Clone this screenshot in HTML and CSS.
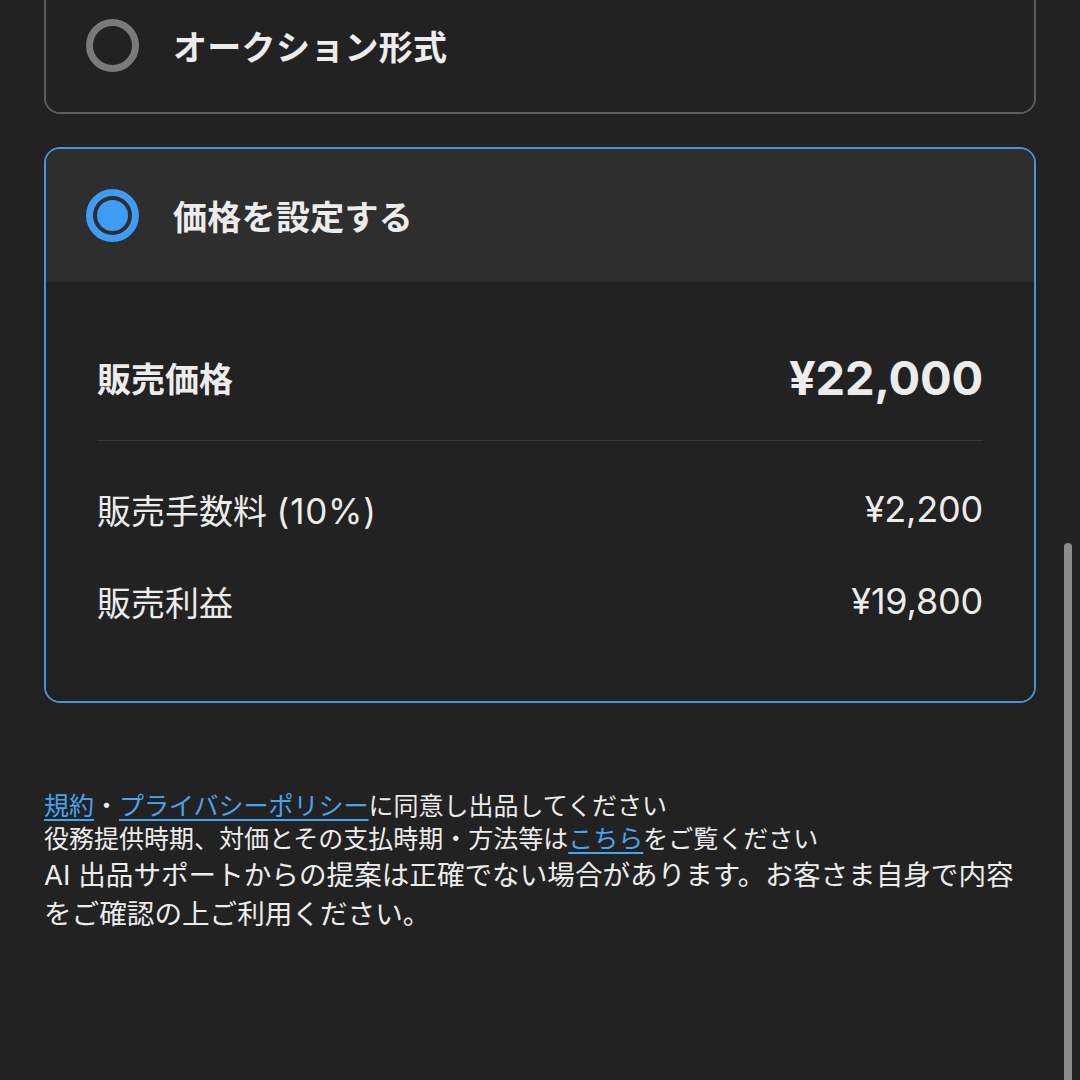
FILE: index.html
```html
<!DOCTYPE html>
<html lang="ja">
<head>
  <meta charset="utf-8">
  <title>出品設定</title>
  <link rel="stylesheet" href="styles.css">
</head>
<body>
  <div class="page">
    <div class="option">
      <div class="option-head">
        <span class="radio"></span>
        <span class="option-title">オークション形式</span>
      </div>
    </div>

    <div class="option selected">
      <div class="option-head">
        <span class="radio checked"></span>
        <span class="option-title">価格を設定する</span>
      </div>
      <div class="option-body">
        <div class="price-row main">
          <span class="label">販売価格</span>
          <span class="amount">¥22,000</span>
        </div>
        <hr class="divider">
        <div class="price-row">
          <span class="label">販売手数料 <span class="rate">(10%)</span></span>
          <span class="amount">¥2,200</span>
        </div>
        <div class="price-row">
          <span class="label">販売利益</span>
          <span class="amount">¥19,800</span>
        </div>
      </div>
    </div>

    <div class="notes">
      <p class="terms"><a href="#">規約</a>・<a href="#">プライバシーポリシー</a>に同意し出品してください<br>役務提供時期、対価とその支払時期・方法等は<a href="#">こちら</a>をご覧ください</p>
      <p class="ai-note">AI 出品サポートからの提案は正確でない場合があります。お客さま自身で内容をご確認の上ご利用ください。</p>
    </div>
  </div>

  <div class="scrollbar"></div>
</body>
</html>
```

FILE: styles.css
```css
/* dark listing form */

html,
body {
  margin: 0;
  background: #222222;
  height: 100%;
  overflow: hidden;
}

body {
  font-family: Inter, "Noto Sans CJK JP", sans-serif;
  color: #ececec;
}

.page {
  padding: 0 44px;
  margin-top: -23px;
}

.option {
  border: 2px solid #5c5c5c;
  border-radius: 16px;
  overflow: hidden;
  margin-bottom: 33px;
}

.option.selected {
  border-color: #4a92e0;
}

.option-head {
  display: flex;
  align-items: center;
  height: 133px;
  padding-left: 40px;
  background: #222222;
}

.option.selected .option-head {
  background: #2e2e2e;
}

.radio {
  box-sizing: border-box;
  width: 53px;
  height: 53px;
  border: 7px solid #7a7a7a;
  border-radius: 50%;
  flex-shrink: 0;
}

.radio.checked {
  border-color: #3f9cf4;
  padding: 4px;
}

.radio.checked::after {
  content: "";
  display: block;
  width: 100%;
  height: 100%;
  border-radius: 50%;
  background: #3f9cf4;
}

.option-title {
  margin-left: 34px;
  font-size: 34px;
  font-weight: 700;
  letter-spacing: 0.3px;
}

.option-body {
  padding: 67px 51px 76px;
  background: #222222;
}

.price-row {
  display: flex;
  justify-content: space-between;
  align-items: center;
  height: 48px;
  font-size: 34px;
  margin-top: 44px;
}

.price-row.main {
  height: 56px;
  margin-top: 0;
}

.price-row.main .label {
  font-weight: 700;
}

.price-row.main .amount {
  font-size: 47px;
  font-weight: 700;
}

.rate {
  font-size: 35px;
  letter-spacing: 0.8px;
}

.amount {
  font-size: 36px;
  letter-spacing: -0.2px;
}

.divider {
  border: 0;
  border-top: 1px solid #3a3a3a;
  margin: 35px 0 0;
}

.notes {
  margin-top: 87px;
  padding-right: 16px;
}

.notes p {
  margin: 0;
}

.terms {
  font-size: 25px;
  line-height: 33px;
}

.ai-note {
  font-size: 27.6px;
  line-height: 39px;
}

.notes a {
  color: #4aa3ef;
  text-decoration: underline;
  text-underline-offset: 4px;
}

.scrollbar {
  position: fixed;
  right: 8px;
  top: 543px;
  bottom: 0;
  width: 8px;
  border-radius: 4px 4px 0 0;
  background: #8c8c8c;
}
```
